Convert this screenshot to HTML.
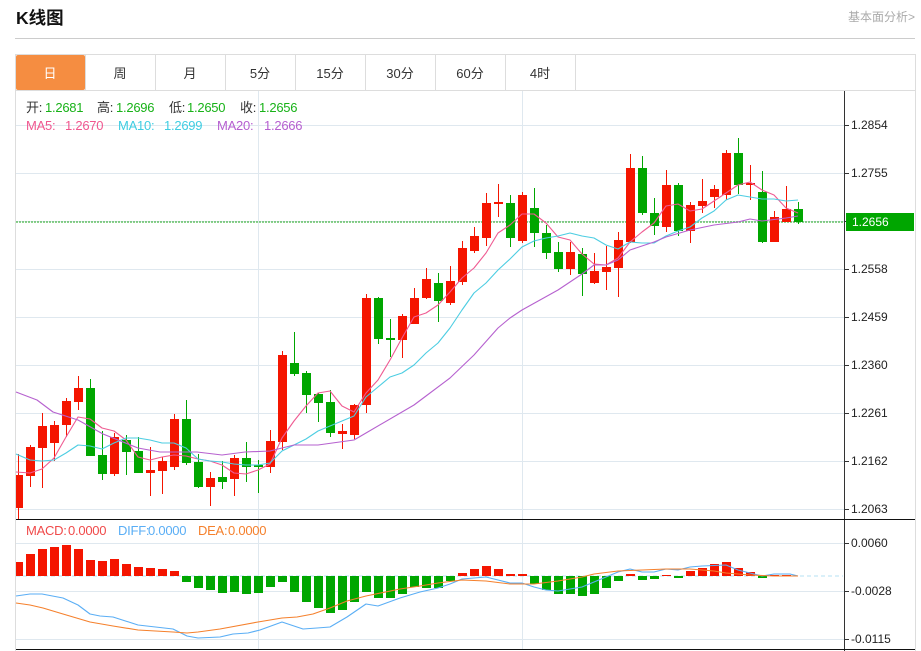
<!DOCTYPE html>
<html lang="zh-CN">
<head>
<meta charset="utf-8">
<title>K线图</title>
<style>
html,body{margin:0;padding:0;background:#fff;width:921px;height:651px;overflow:hidden}
svg{display:block}
text{font-family:"Liberation Sans","Noto Sans CJK SC",sans-serif}
.ax{font-size:12px;fill:#222}
.tb{font-size:13px;fill:#333;text-anchor:middle}
.i{font-size:13px;letter-spacing:-.25px}
</style>
</head>
<body>
<svg xmlns="http://www.w3.org/2000/svg" width="921" height="651" viewBox="0 0 921 651">
<rect width="921" height="651" fill="#fff"/>
<text x="16" y="24" font-size="17.5" font-weight="700" fill="#111">K线图</text>
<text x="848" y="21" font-size="12" fill="#aaa">基本面分析&gt;</text>
<g shape-rendering="crispEdges">
<rect x="15" y="38" width="900" height="1" fill="#ccc"/>
<rect x="15" y="54" width="901" height="1" fill="#ddd"/>
<rect x="15" y="90" width="901" height="1" fill="#ddd"/>
<rect x="15" y="54" width="1" height="597" fill="#ddd"/>
<rect x="915" y="54" width="1" height="597" fill="#ddd"/>
<rect x="85" y="55" width="1" height="35" fill="#ddd"/>
<rect x="155" y="55" width="1" height="35" fill="#ddd"/>
<rect x="225" y="55" width="1" height="35" fill="#ddd"/>
<rect x="295" y="55" width="1" height="35" fill="#ddd"/>
<rect x="365" y="55" width="1" height="35" fill="#ddd"/>
<rect x="435" y="55" width="1" height="35" fill="#ddd"/>
<rect x="505" y="55" width="1" height="35" fill="#ddd"/>
<rect x="575" y="55" width="1" height="35" fill="#ddd"/>
</g>
<rect x="16" y="55" width="69" height="35" rx="2" fill="#f58d41"/>
<text class="tb" x="50" y="78" style="fill:#fff">日</text>
<text class="tb" x="120" y="78">周</text>
<text class="tb" x="190" y="78">月</text>
<text class="tb" x="260" y="78">5分</text>
<text class="tb" x="330" y="78">15分</text>
<text class="tb" x="400" y="78">30分</text>
<text class="tb" x="470" y="78">60分</text>
<text class="tb" x="540" y="78">4时</text>

<!-- grid -->
<path shape-rendering="crispEdges" fill="#dfe8ef" d="M258 91h1V649h-1zM522 91h1V649h-1zM16 125H845v1H16zM16 173H845v1H16zM16 221H845v1H16zM16 269H845v1H16zM16 317H845v1H16zM16 365H845v1H16zM16 413H845v1H16zM16 461H845v1H16zM16 509H845v1H16zM16 543H845v1H16zM16 591H845v1H16zM16 639H845v1H16z"/>

<!-- current price -->
<line x1="16" y1="222" x2="843" y2="222" stroke="#2fae2f" stroke-width="2" stroke-dasharray="2 1" opacity=".55" shape-rendering="crispEdges"/>
<!-- MACD zero -->
<line x1="16" y1="576" x2="843" y2="576" stroke="#b6e2f3" stroke-width="1" stroke-dasharray="4 3" shape-rendering="crispEdges"/>

<!-- red candles -->
<path shape-rendering="crispEdges" fill="#f41500" d="
M18 454h1V519h-1zM16 475h7V508h-7z
M30 445h1V487h-1zM26 447h9V476h-9z
M42 413h1V488h-1zM38 426h9V448h-9z
M54 421h1V461h-1zM50 425h9V443h-9z
M66 398h1V437h-1zM62 401h9V425h-9z
M78 376h1V410h-1zM74 388h9V402h-9z
M114 433h1V476h-1zM110 437h9V474h-9z
M150 447h1V496h-1zM146 470h9V473h-9z
M162 457h1V494h-1zM158 461h9V471h-9z
M174 414h1V470h-1zM170 419h9V467h-9z
M210 472h1V506h-1zM206 478h9V487h-9z
M234 455h1V496h-1zM230 458h9V479h-9z
M270 430h1V473h-1zM266 441h9V467h-9z
M282 351h1V450h-1zM278 355h9V442h-9z
M342 424h1V449h-1zM338 431h9V434h-9z
M354 404h1V439h-1zM350 405h9V435h-9z
M366 294h1V413h-1zM362 298h9V405h-9z
M402 314h1V358h-1zM398 316h9V340h-9z
M414 288h1V324h-1zM410 298h9V324h-9z
M426 268h1V299h-1zM422 279h9V298h-9z
M450 266h1V305h-1zM446 281h9V303h-9z
M462 241h1V285h-1zM458 248h9V282h-9z
M474 227h1V253h-1zM470 236h9V251h-9z
M486 193h1V246h-1zM482 203h9V238h-9z
M498 184h1V217h-1zM494 202h9V204h-9z
M522 192h1V243h-1zM518 195h9V241h-9z
M570 242h1V275h-1zM566 252h9V269h-9z
M594 253h1V284h-1zM590 271h9V283h-9z
M606 246h1V290h-1zM602 267h9V272h-9z
M618 232h1V297h-1zM614 240h9V268h-9z
M630 154h1V243h-1zM626 168h9V242h-9z
M666 170h1V232h-1zM662 185h9V227h-9z
M690 202h1V243h-1zM686 205h9V231h-9z
M702 179h1V213h-1zM698 201h9V206h-9z
M714 185h1V208h-1zM710 189h9V197h-9z
M726 150h1V200h-1zM722 153h9V195h-9z
M750 165h1V200h-1zM746 183h9V185h-9z
M774 211h1V242h-1zM770 217h9V242h-9z
M786 186h1V222h-1zM782 209h9V222h-9z
"/>
<!-- green candles -->
<path shape-rendering="crispEdges" fill="#00a600" d="
M90 379h1V456h-1zM86 388h9V456h-9z
M102 431h1V480h-1zM98 455h9V474h-9z
M126 435h1V475h-1zM122 440h9V452h-9z
M138 437h1V473h-1zM134 451h9V473h-9z
M186 400h1V465h-1zM182 419h9V463h-9z
M198 454h1V488h-1zM194 462h9V487h-9z
M222 461h1V489h-1zM218 477h9V482h-9z
M246 442h1V482h-1zM242 458h9V467h-9z
M258 460h1V493h-1zM254 465h9V467h-9z
M294 332h1V376h-1zM290 363h9V374h-9z
M306 371h1V413h-1zM302 373h9V395h-9z
M318 393h1V422h-1zM314 394h9V403h-9z
M330 390h1V437h-1zM326 402h9V433h-9z
M378 297h1V344h-1zM374 298h9V339h-9z
M390 319h1V357h-1zM386 338h9V340h-9z
M438 273h1V322h-1zM434 283h9V301h-9z
M510 195h1V247h-1zM506 203h9V238h-9z
M534 188h1V247h-1zM530 208h9V233h-9z
M546 225h1V259h-1zM542 233h9V253h-9z
M558 242h1V272h-1zM554 252h9V269h-9z
M582 248h1V296h-1zM578 254h9V274h-9z
M642 156h1V215h-1zM638 168h9V213h-9z
M654 198h1V235h-1zM650 213h9V226h-9z
M678 183h1V236h-1zM674 185h9V231h-9z
M738 138h1V194h-1zM734 153h9V185h-9z
M762 171h1V243h-1zM758 192h9V242h-9z
M798 202h1V224h-1zM794 209h9V222h-9z
"/>
<!-- MA lines -->
<g fill="none" stroke-width="1.1" stroke-linejoin="round">
<polyline stroke="#ef5b92" points="16,472 30,473 42,469 54,458 66,437 78,417 90,419 102,428 114,431 126,440 138,457 150,460 162,457 174,455 186,456 198,459 210,461 222,465 234,473 246,474 258,470 270,464 282,438 294,421 306,406 318,393 330,391 342,406 354,412 366,393 378,380 390,360 402,338 414,317 426,313 438,305 450,292 462,278 474,268 486,253 498,233 510,225 522,214 534,214 546,223 558,237 570,240 582,254 594,264 606,265 618,258 630,242 642,232 654,223 666,206 678,204 690,211 702,209 714,201 726,193 738,185 750,182 762,190 774,195 786,208 798,213"/>
<polyline stroke="#4ccde2" points="16,454 30,460 42,461 54,460 66,453 78,445 90,446 102,449 114,443 126,438 138,438 150,440 162,443 174,443 186,448 198,459 210,461 222,462 234,464 246,465 258,465 270,463 282,451 294,445 306,439 318,431 330,426 342,421 354,416 366,397 378,387 390,377 402,373 414,365 426,353 438,343 450,328 462,310 474,293 486,283 498,270 510,259 522,247 534,241 546,238 558,236 570,233 582,236 594,238 606,245 618,249 630,242 642,243 654,243 666,236 678,231 690,227 702,218 714,211 726,200 738,195 750,197 762,199 774,199 786,201 798,200"/>
<polyline stroke="#b661cf" points="16,392 37,400 53,412 78,420 103,434 138,448 160,452 197,452 222,455 245,452 270,451 294,445 318,445 354,440 366,433 402,412 414,405 426,396 450,378 474,355 498,328 510,318 522,310 558,290 582,274 594,265 606,265 618,260 630,250 654,242 666,237 690,230 714,225 738,222 750,219 762,221 786,218 798,216"/>
</g>

<!-- axis -->
<g shape-rendering="crispEdges" fill="#333">
<rect x="844" y="91" width="1" height="560"/>
<path d="M845 125h4v1h-4zM845 173h4v1h-4zM845 221h4v1h-4zM845 269h4v1h-4zM845 317h4v1h-4zM845 365h4v1h-4zM845 413h4v1h-4zM845 461h4v1h-4zM845 509h4v1h-4zM845 543h4v1h-4zM845 591h4v1h-4zM845 639h4v1h-4z"/>
<rect x="16" y="519" width="899" height="1" fill="#111"/>
<rect x="16" y="649" width="899" height="1" fill="#111"/>
</g>
<rect x="846" y="213" width="68" height="18" fill="#00a600"/>
<text x="852" y="226" font-size="12" fill="#fff">1.2656</text>
<text class="ax" x="851" y="129">1.2854</text>
<text class="ax" x="851" y="177">1.2755</text>
<text class="ax" x="851" y="273">1.2558</text>
<text class="ax" x="851" y="321">1.2459</text>
<text class="ax" x="851" y="369">1.2360</text>
<text class="ax" x="851" y="417">1.2261</text>
<text class="ax" x="851" y="465">1.2162</text>
<text class="ax" x="851" y="513">1.2063</text>
<text class="ax" x="851" y="547">0.0060</text>
<text class="ax" x="851" y="595">-0.0028</text>
<text class="ax" x="851" y="643">-0.0115</text>

<!-- info -->
<g class="i">
<text class="i" x="26" y="112" fill="#333">开:</text><text class="i" x="45" y="112" fill="#18b218">1.2681</text>
<text class="i" x="97" y="112" fill="#333">高:</text><text class="i" x="116" y="112" fill="#18b218">1.2696</text>
<text class="i" x="169" y="112" fill="#333">低:</text><text class="i" x="187" y="112" fill="#18b218">1.2650</text>
<text class="i" x="240" y="112" fill="#333">收:</text><text class="i" x="259" y="112" fill="#18b218">1.2656</text>
<text class="i" x="26" y="130" fill="#f0578f">MA5:</text><text class="i" x="65" y="130" fill="#f0578f">1.2670</text>
<text class="i" x="118" y="130" fill="#3fcde2">MA10:</text><text class="i" x="164" y="130" fill="#3fcde2">1.2699</text>
<text class="i" x="217" y="130" fill="#b65fd0">MA20:</text><text class="i" x="264" y="130" fill="#b65fd0">1.2666</text>
<text class="i" x="26" y="535" fill="#f04a4a">MACD:</text><text class="i" x="68" y="535" fill="#f04a4a">0.0000</text>
<text class="i" x="118" y="535" fill="#5aaef5">DIFF:</text><text class="i" x="148" y="535" fill="#5aaef5">0.0000</text>
<text class="i" x="198" y="535" fill="#f5802c">DEA:</text><text class="i" x="228" y="535" fill="#f5802c">0.0000</text>
</g>

<!-- MACD bars -->
<path shape-rendering="crispEdges" fill="#f41500" d="
M16 562h7V576h-7zM26 554h9V576h-9zM38 549h9V576h-9zM50 547h9V576h-9zM62 545h9V576h-9zM74 549h9V576h-9zM86 560h9V576h-9zM98 561h9V576h-9zM110 559h9V576h-9zM122 564h9V576h-9zM134 567h9V576h-9zM146 568h9V576h-9zM158 569h9V576h-9zM170 571h9V576h-9z
M458 573h9V576h-9zM470 569h9V576h-9zM482 566h9V576h-9zM494 569h9V576h-9zM506 574h9V576h-9zM518 574h9V576h-9z
M626 574h9V576h-9zM662 575h9V576h-9zM686 571h9V576h-9zM698 568h9V576h-9zM710 564h9V576h-9zM722 562h9V576h-9zM734 568h9V576h-9zM746 572h9V576h-9zM770 575h9V576h-9zM782 575h9V576h-9z"/>
<path shape-rendering="crispEdges" fill="#00a600" d="
M182 576h9V582h-9zM194 576h9V588h-9zM206 576h9V590h-9zM218 576h9V593h-9zM230 576h9V592h-9zM242 576h9V594h-9zM254 576h9V593h-9zM266 576h9V587h-9zM278 576h9V582h-9zM290 576h9V592h-9zM302 576h9V602h-9zM314 576h9V608h-9zM326 576h9V613h-9zM338 576h9V610h-9zM350 576h9V602h-9zM362 576h9V592h-9zM374 576h9V598h-9zM386 576h9V598h-9zM398 576h9V594h-9zM410 576h9V587h-9zM422 576h9V588h-9zM434 576h9V588h-9zM446 576h9V581h-9z
M530 576h9V584h-9zM542 576h9V590h-9zM554 576h9V594h-9zM566 576h9V594h-9zM578 576h9V596h-9zM590 576h9V594h-9zM602 576h9V588h-9zM614 576h9V581h-9z
M638 576h9V580h-9zM650 576h9V579h-9zM674 576h9V578h-9zM758 576h9V578h-9z"/>
<!-- DIFF / DEA -->
<g fill="none" stroke-width="1.1" stroke-linejoin="round">
<polyline stroke="#5aaef5" points="16,596 30,594 42,594 63,598 78,605 90,614 100,616 113,617 138,625 173,629 187,636 198,638 220,637 233,634 248,633 260,630 282,622 303,629 317,628 330,627 347,617 366,604 378,606 400,598 420,592 438,588 450,584 462,579 486,577 498,580 510,583 522,583 534,587 546,590 558,591 582,587 594,582 606,577 618,572 630,569 642,572 654,572 666,569 678,570 690,567 702,566 726,565 738,570 750,573 762,576 774,574 790,574 798,576"/>
<polyline stroke="#f5802c" points="16,603 30,605 43,608 63,614 90,622 113,626 138,630 173,632 187,633 198,632 220,629 258,622 282,618 297,617 313,614 330,608 347,601 366,596 400,589 420,586 438,583 462,580 486,581 510,584 534,584 558,581 582,577 594,574 618,571 642,570 666,569 690,569 714,571 726,573 750,575 774,576 798,576"/>
</g>
</svg>
</body>
</html>
